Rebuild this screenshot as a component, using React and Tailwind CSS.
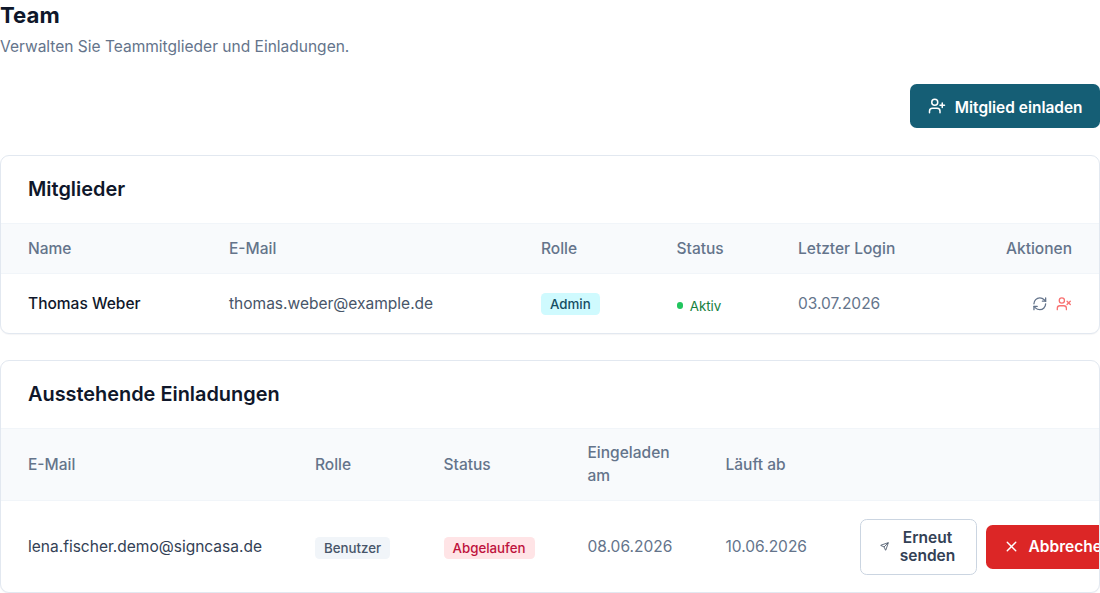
import { LuUserPlus, LuRefreshCw, LuUserX, LuX, LuSend } from 'react-icons/lu'

const members = [
  { name: 'Thomas Weber', email: 'thomas.weber@example.de', role: 'Admin', status: 'Aktiv', lastLogin: '03.07.2026' },
]

const invitations = [
  {
    email: 'lena.fischer.demo@signcasa.de',
    role: 'Benutzer',
    status: 'Abgelaufen',
    invitedAt: '08.06.2026',
    expiresAt: '10.06.2026',
  },
]

const badgeClass = {
  Admin: 'bg-[#cffafe] text-[#164e63]',
  Benutzer: 'bg-[#f1f5f9] text-[#475569]',
  Abgelaufen: 'bg-[#ffe4e6] text-[#be123c]',
}

function Badge({ label }) {
  return (
    <span
      className={`inline-flex items-center rounded-[4.5px] px-[9px] py-[2px] align-middle text-[13.3px] leading-[18px] font-medium ${badgeClass[label]}`}
    >
      {label}
    </span>
  )
}

function Card({ title, children }) {
  return (
    <section className="overflow-hidden rounded-[9px] border border-[#e2e8f0] bg-white shadow-[0_1px_1px_rgba(15,23,42,0.04)]">
      <div className="flex h-[68px] items-center border-b border-[#f1f5f9] px-[27px]">
        <h2 className="text-[19.9px] font-semibold text-[#0f172a]">{title}</h2>
      </div>
      {children}
    </section>
  )
}

function Th({ children }) {
  return <th className="px-[27px] text-left font-medium">{children}</th>
}

export default function App() {
  return (
    <main className="h-[593px] overflow-hidden bg-white font-['Inter',sans-serif] text-[15.52px] leading-[22.3px] text-[#0f172a]">
      <h1 className="text-[22.2px] leading-[30px] font-bold">Team</h1>
      <p className="pt-[6px] text-[#64748b]">Verwalten Sie Teammitglieder und Einladungen.</p>

      <div className="mt-[26px] flex justify-end">
        <button className="flex h-[44px] items-center gap-[9px] rounded-[6.7px] bg-[#155e75] px-[17.5px] text-[15.45px] font-semibold text-white">
          <LuUserPlus className="size-[18px]" strokeWidth={2} />
          <span className="pt-[3px]">Mitglied einladen</span>
        </button>
      </div>

      <div className="mt-[26.7px] flex flex-col gap-[26px]">
        <Card title="Mitglieder">
          <table className="w-full table-fixed">
            <colgroup>
              <col className="w-[201px]" />
              <col className="w-[312px]" />
              <col className="w-[135.5px]" />
              <col className="w-[121.5px]" />
              <col className="w-[164px]" />
              <col />
            </colgroup>
            <thead className="bg-[#f8fafc] text-[#64748b]">
              <tr className="h-[50px] border-b border-[#f1f5f9]">
                <Th>Name</Th>
                <Th>E-Mail</Th>
                <Th>Rolle</Th>
                <Th>Status</Th>
                <Th>Letzter Login</Th>
                <th className="px-[27px] text-right font-medium">Aktionen</th>
              </tr>
            </thead>
            <tbody>
              {members.map((m) => (
                <tr key={m.email} className="h-[59px]">
                  <td className="px-[27px] pt-px font-medium">{m.name}</td>
                  <td className="px-[27px] pt-px text-[#475569]">{m.email}</td>
                  <td className="px-[27px] pb-px">
                    <Badge label={m.role} />
                  </td>
                  <td className="px-[27px] pt-1">
                    <span className="flex items-center gap-[6.5px] text-[13.35px] text-[#15803d]">
                      <span className="size-[6.7px] rounded-full bg-[#22c55e]" />
                      {m.status}
                    </span>
                  </td>
                  <td className="px-[27px] pt-px text-[#64748b]">{m.lastLogin}</td>
                  <td className="px-[27px]">
                    <div className="flex justify-end gap-[9px]">
                      <LuRefreshCw className="size-[15.6px] text-[#64748b]" strokeWidth={2} />
                      <LuUserX className="size-[15.6px] text-[#f87171]" strokeWidth={2} />
                    </div>
                  </td>
                </tr>
              ))}
            </tbody>
          </table>
        </Card>

        <Card title="Ausstehende Einladungen">
          <table className="w-full table-fixed">
            <colgroup>
              <col className="w-[287px]" />
              <col className="w-[128.5px]" />
              <col className="w-[144px]" />
              <col className="w-[138px]" />
              <col className="w-[135px]" />
              <col />
            </colgroup>
            <thead className="bg-[#f8fafc] text-[#64748b]">
              <tr className="h-[72px] border-b border-[#f1f5f9]">
                <Th>E-Mail</Th>
                <Th>Rolle</Th>
                <Th>Status</Th>
                <Th>Eingeladen am</Th>
                <Th>Läuft ab</Th>
                <Th />
              </tr>
            </thead>
            <tbody>
              {invitations.map((inv) => (
                <tr key={inv.email} className="h-[91px]">
                  <td className="px-[27px] whitespace-nowrap text-[#334155]">{inv.email}</td>
                  <td className="px-[27px] pt-px">
                    <Badge label={inv.role} />
                  </td>
                  <td className="px-[27px] pt-px">
                    <Badge label={inv.status} />
                  </td>
                  <td className="px-[27px] text-[#64748b]">{inv.invitedAt}</td>
                  <td className="px-[27px] text-[#64748b]">{inv.expiresAt}</td>
                  <td className="pl-[26px]">
                    <div className="flex items-center gap-[9px] font-semibold">
                      <button className="flex h-[56px] w-[117px] shrink-0 items-center justify-center gap-[11px] rounded-[6.7px] border border-[#cbd5e1] pr-px leading-[18px] text-[#334155]">
                        <LuSend className="size-[9px]" strokeWidth={2} />
                        <span className="w-[56px] text-center">Erneut senden</span>
                      </button>
                      <button className="flex h-[44px] shrink-0 items-center gap-[9px] rounded-[6.7px] bg-[#dc2626] px-[17px] text-white">
                        <LuX className="size-[17px]" strokeWidth={2} />
                        Abbrechen
                      </button>
                    </div>
                  </td>
                </tr>
              ))}
            </tbody>
          </table>
        </Card>
      </div>
    </main>
  )
}
